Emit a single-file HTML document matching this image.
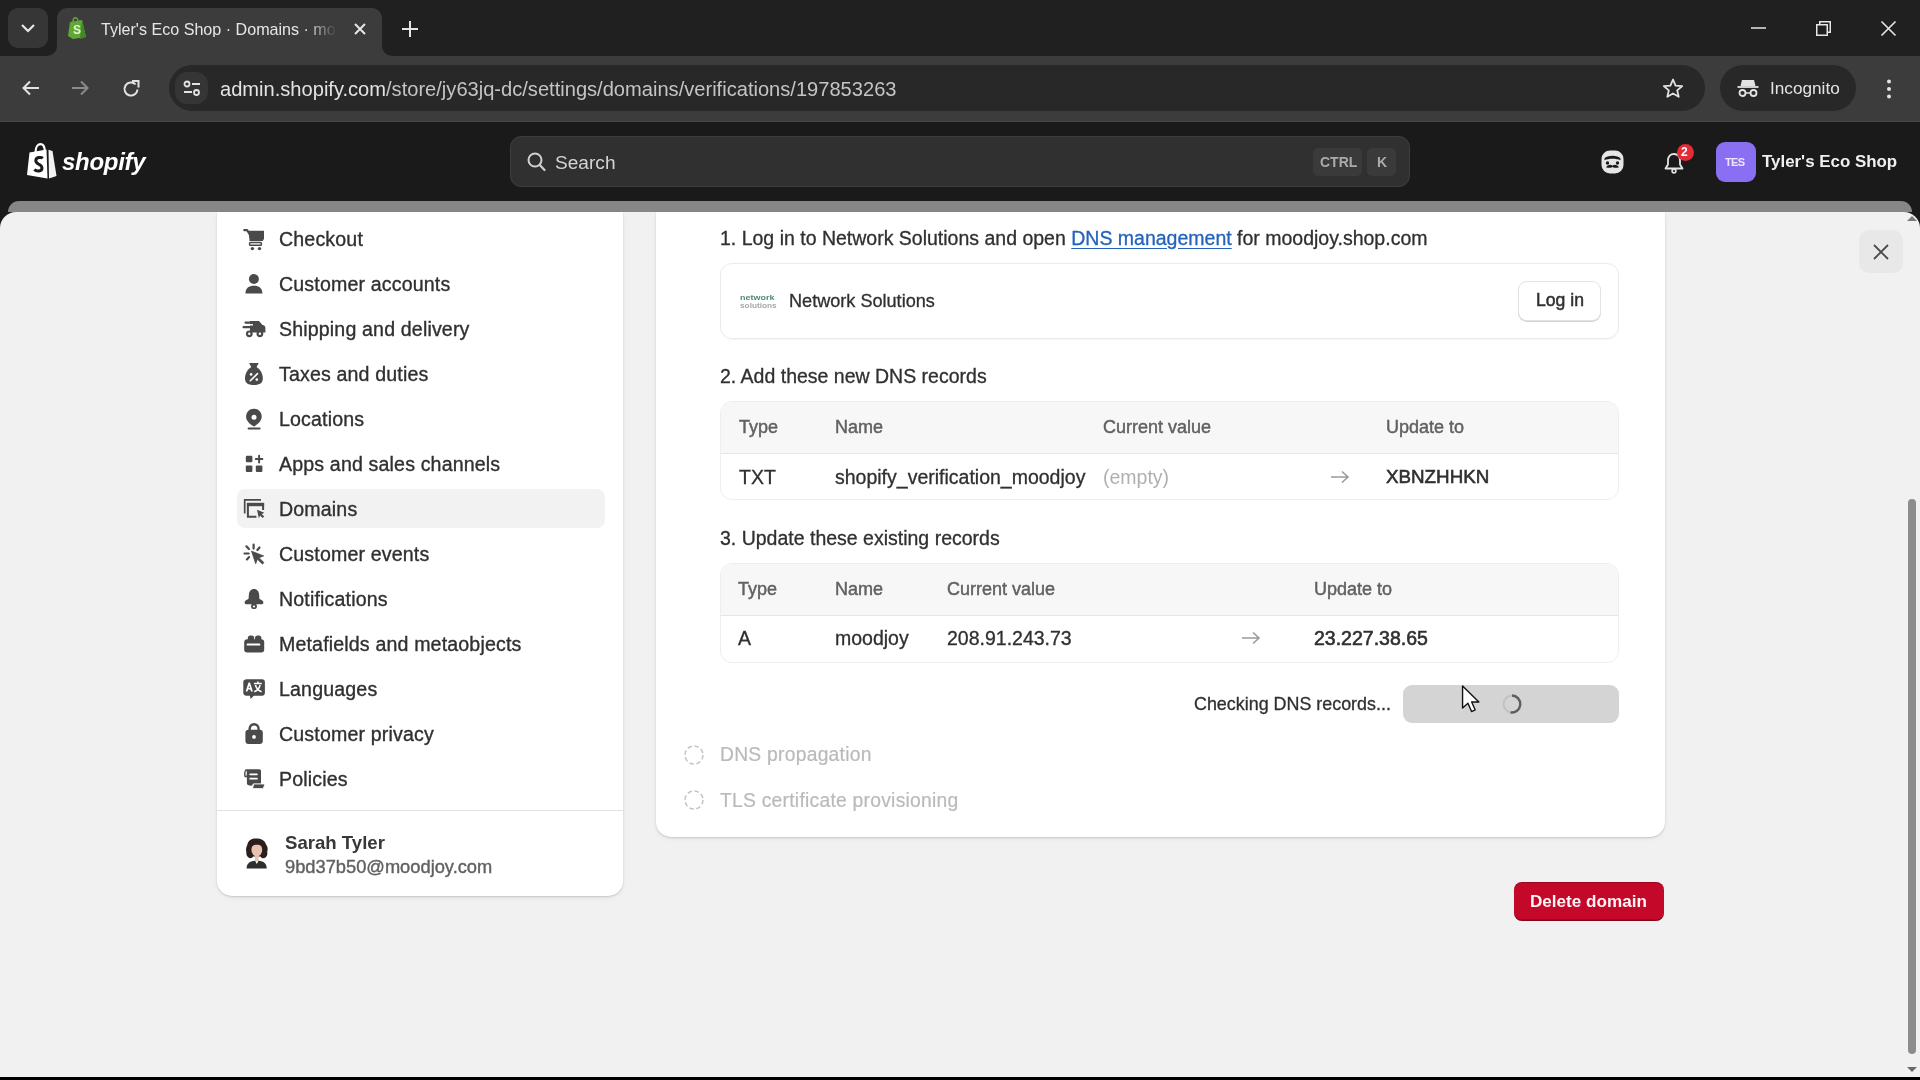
<!DOCTYPE html>
<html><head><meta charset="utf-8">
<style>
*{margin:0;padding:0;box-sizing:border-box}
html,body{width:1920px;height:1080px;overflow:hidden;background:#f1f1f1;font-family:"Liberation Sans",sans-serif}
body{will-change:transform}
.a{position:absolute}
.t{position:absolute;white-space:nowrap;line-height:1}
.card{position:absolute;background:#fff}
.st{-webkit-text-stroke:0.2px currentColor}
svg{position:absolute;overflow:visible}
</style></head><body>
<div class="a" style="left:0;top:0;width:1920px;height:56px;background:#202020"></div>
<div class="a" style="left:8px;top:8px;width:40px;height:40px;border-radius:10px;background:#363636"></div>
<svg style="left:20px;top:22px" width="16" height="12"><path d="M2 3 L8 9 L14 3" stroke="#e8e8e8" stroke-width="2.2" fill="none"/></svg>
<div class="a" style="left:57px;top:8px;width:325px;height:48px;border-radius:10px 10px 0 0;background:#3c3c3c"></div>
<svg style="left:47px;top:46px" width="10" height="10"><path d="M0 10 A10 10 0 0 0 10 0 V10 Z" fill="#3c3c3c"/></svg>
<svg style="left:382px;top:46px" width="10" height="10"><path d="M0 0 A10 10 0 0 0 10 10 H0 Z" fill="#3c3c3c"/></svg>
<svg style="left:67px;top:16px" width="21" height="24" viewBox="0 0 21 24"><path d="M3 6 L15 4 L19 21 L6 23 L1 20 Z" fill="#5fa836"/><path d="M15 4 L19 21 L13 23 Z" fill="#3f8a24"/><path d="M6 6 C6 1 10 0 11 5" stroke="#5fa836" stroke-width="1.5" fill="none"/><text x="6" y="18" font-family="Liberation Sans" font-weight="bold" font-size="12" fill="#e8f5d0">S</text></svg>
<div class="t" style="left:101px;top:21px;font-size:16.1px;color:#e6e6e6;width:238px;overflow:hidden;-webkit-mask-image:linear-gradient(90deg,#000 205px,transparent 236px)">Tyler's Eco Shop · Domains · moodjoy</div>
<svg style="left:354px;top:23px" width="12" height="12"><path d="M1 1 L11 11 M11 1 L1 11" stroke="#e6e6e6" stroke-width="2" fill="none"/></svg>
<svg style="left:402px;top:21px" width="16" height="16"><path d="M8 0 V16 M0 8 H16" stroke="#e6e6e6" stroke-width="2" fill="none"/></svg>
<svg style="left:1751px;top:27px" width="16" height="2"><path d="M0 1 H15" stroke="#e6e6e6" stroke-width="1.5"/></svg>
<svg style="left:1816px;top:21px" width="16" height="16"><path d="M0.75 3.75 H11.25 V14.25 H0.75 Z M3.75 3.75 V0.75 H14.25 V11.25 H11.25" stroke="#e6e6e6" stroke-width="1.5" fill="none"/></svg>
<svg style="left:1881px;top:21px" width="15" height="15"><path d="M0.5 0.5 L14.5 14.5 M14.5 0.5 L0.5 14.5" stroke="#e6e6e6" stroke-width="1.6"/></svg>
<div class="a" style="left:0;top:56px;width:1920px;height:66px;background:#3c3c3c;border-bottom:1px solid #474747"></div>
<svg style="left:22px;top:80px" width="18" height="16"><path d="M17 8 H2 M8 1.5 L1.5 8 L8 14.5" stroke="#e3e3e3" stroke-width="2" fill="none"/></svg>
<svg style="left:71px;top:80px" width="18" height="16"><path d="M1 8 H16 M10 1.5 L16.5 8 L10 14.5" stroke="#8a8a8a" stroke-width="2" fill="none"/></svg>
<svg style="left:122px;top:80px" width="19" height="18"><path d="M15.5 9.5 A6.5 6.5 0 1 1 13.6 4.4" stroke="#e3e3e3" stroke-width="2" fill="none"/><path d="M10 1 H16.5 V7.5" stroke="#e3e3e3" stroke-width="2" fill="none"/></svg>
<div class="a" style="left:169px;top:65px;width:1536px;height:46px;border-radius:23px;background:#282828"></div>
<div class="a" style="left:175px;top:72px;width:33px;height:32px;border-radius:12px;background:#353535"></div>
<svg style="left:183px;top:80px" width="18" height="17"><circle cx="4" cy="4" r="2.5" stroke="#e3e3e3" stroke-width="1.8" fill="none"/><path d="M9 4 H17 M1 12 H9" stroke="#e3e3e3" stroke-width="1.8"/><circle cx="13.5" cy="12.5" r="2.5" stroke="#e3e3e3" stroke-width="1.8" fill="none"/></svg>
<div class="t" style="left:220px;top:79px;font-size:20.1px;color:#e3e3e3">admin.shopify.com<span style="color:#c4c4c4">/store/jy63jq-dc/settings/domains/verifications/197853263</span></div>
<svg style="left:1662px;top:78px" width="22" height="21"><path d="M11 1.5 L13.6 7.6 L20.2 8.1 L15.2 12.4 L16.7 18.8 L11 15.4 L5.3 18.8 L6.8 12.4 L1.8 8.1 L8.4 7.6 Z" stroke="#e3e3e3" stroke-width="1.8" fill="none" stroke-linejoin="round"/></svg>
<div class="a" style="left:1720px;top:65px;width:136px;height:46px;border-radius:23px;background:#282828"></div>
<svg style="left:1737px;top:79px" width="22" height="19"><path d="M5 1 H17 L18.5 7 H3.5 Z" fill="#e3e3e3"/><path d="M0.5 8 H21.5" stroke="#e3e3e3" stroke-width="1.8"/><circle cx="5.5" cy="14" r="3" stroke="#e3e3e3" stroke-width="1.8" fill="none"/><circle cx="16.5" cy="14" r="3" stroke="#e3e3e3" stroke-width="1.8" fill="none"/><path d="M8.5 14 H13.5" stroke="#e3e3e3" stroke-width="1.5"/></svg>
<div class="t" style="left:1770px;top:80px;font-size:17.2px;color:#e3e3e3">Incognito</div>
<svg style="left:1886px;top:79px" width="6" height="21"><circle cx="3" cy="2.5" r="2" fill="#e3e3e3"/><circle cx="3" cy="10" r="2" fill="#e3e3e3"/><circle cx="3" cy="17.5" r="2" fill="#e3e3e3"/></svg>
<div class="a" style="left:0;top:122px;width:1920px;height:108px;background:#1a1a1a"></div>
<svg style="left:26px;top:143px" width="32" height="37" viewBox="0 0 32 37"><path d="M3.5 9.5 L20.5 6.5 L21.5 35.5 L1 32 Z" fill="#fff"/><path d="M22.5 6.8 L26.5 8 L30.5 33 L23 35.6 Z" fill="#f2f2f2"/><path d="M9.5 9.5 C9.5 3 12.5 1.2 14.5 1.2 C17 1.2 18.5 3.5 18.8 7.5" stroke="#fff" stroke-width="2.2" fill="none"/><path d="M16.8 15.3 C15.5 14 9.8 13.8 9.8 17.8 C9.8 21.5 16 21 16 25 C16 28.8 10.5 28.8 8.3 26.5" stroke="#1a1a1a" stroke-width="3" fill="none"/></svg>
<div class="t" style="left:62px;top:150px;font-size:24px;font-weight:bold;font-style:italic;color:#fff;letter-spacing:-0.3px">shopify</div>
<div class="a" style="left:510px;top:136px;width:900px;height:51px;border-radius:11px;background:#303030;border:1px solid #3d3d3d"></div>
<svg style="left:527px;top:152px" width="19" height="20"><circle cx="8" cy="8" r="6.5" stroke="#d0d0d0" stroke-width="2" fill="none"/><path d="M12.8 13 L17.5 18" stroke="#d0d0d0" stroke-width="2.2" stroke-linecap="round"/></svg>
<div class="t" style="left:555px;top:153px;font-size:19.1px;color:#d4d4d4">Search</div>
<div class="a" style="left:1313px;top:148px;width:49px;height:28px;border-radius:5px;background:#3a3a3a"></div>
<div class="t" style="left:1320px;top:155px;font-size:14px;font-weight:bold;color:#ababab">CTRL</div>
<div class="a" style="left:1367px;top:148px;width:29px;height:28px;border-radius:5px;background:#3a3a3a"></div>
<div class="t" style="left:1377px;top:155px;font-size:14px;font-weight:bold;color:#ababab">K</div>
<svg style="left:1601px;top:150px" width="23" height="24" viewBox="0 0 23 24"><rect x="0.5" y="0.5" width="22" height="23" rx="8.5" fill="#e6e6e6"/><path d="M3.5 8.5 C6 4.8 17 4.8 19.5 8.5 L19.5 10.3 C16 8.3 7 8.3 3.5 10.3 Z" fill="#1a1a1a"/><circle cx="6.5" cy="13" r="1.7" fill="#1a1a1a"/><circle cx="16.5" cy="13" r="1.7" fill="#1a1a1a"/><path d="M5 17.2 C7.5 14.2 10 14.2 11.5 15.8 C13 14.2 15.5 14.2 18 17.2 C15.5 18.2 13.5 18 11.5 16.9 C9.5 18 7.5 18.2 5 17.2 Z" fill="#1a1a1a"/></svg>
<svg style="left:1663px;top:150px" width="24" height="25" viewBox="0 0 24 25"><path d="M11 4 C7 4 5 7 5 10.5 V14.5 L2.5 18.5 H19.5 L17 14.5 V10.5 C17 7 15 4 11 4 Z" stroke="#e3e3e3" stroke-width="1.8" fill="none" stroke-linejoin="round"/><circle cx="11" cy="21" r="1.9" stroke="#e3e3e3" stroke-width="1.6" fill="none"/></svg>
<div class="a" style="left:1677px;top:144px;width:17px;height:17px;border-radius:9px;background:#e22c38"></div>
<div class="t" style="left:1681px;top:146px;font-size:12px;font-weight:bold;color:#fff">2</div>
<div class="a" style="left:1716px;top:142px;width:40px;height:40px;border-radius:9px;background:#8a6ff3"></div>
<div class="t" style="left:1725px;top:157px;font-size:11px;font-weight:bold;color:#ece6ff;letter-spacing:-0.6px">TES</div>
<div class="t" style="left:1762px;top:154px;font-size:16.9px;font-weight:bold;color:#f0f0f0">Tyler's Eco Shop</div>
<div class="a" style="left:8px;top:201px;width:1904px;height:11px;border-radius:12px 12px 0 0;background:#878787"></div>
<div class="a" style="left:0;top:212px;width:1920px;height:865px;border-radius:16px 16px 0 0;background:#f1f1f1"></div>
<div class="card" style="left:217px;top:212px;width:406px;height:684px;border-radius:0 0 15px 15px;box-shadow:0 1px 2px rgba(0,0,0,0.16), 0 2px 6px rgba(0,0,0,0.04)"></div>
<div class="a" style="left:237px;top:489px;width:368px;height:39px;border-radius:8px;background:#f2f2f2"></div>
<div class="t" style="left:279px;top:230.4px;font-size:19.6px;color:#303030;-webkit-text-stroke:0.35px #303030;letter-spacing:0.15px">Checkout</div>
<div class="t" style="left:279px;top:275.4px;font-size:19.6px;color:#303030;-webkit-text-stroke:0.35px #303030;letter-spacing:0.15px">Customer accounts</div>
<div class="t" style="left:279px;top:320.4px;font-size:19.6px;color:#303030;-webkit-text-stroke:0.35px #303030;letter-spacing:0.15px">Shipping and delivery</div>
<div class="t" style="left:279px;top:365.4px;font-size:19.6px;color:#303030;-webkit-text-stroke:0.35px #303030;letter-spacing:0.15px">Taxes and duties</div>
<div class="t" style="left:279px;top:410.4px;font-size:19.6px;color:#303030;-webkit-text-stroke:0.35px #303030;letter-spacing:0.15px">Locations</div>
<div class="t" style="left:279px;top:455.4px;font-size:19.6px;color:#303030;-webkit-text-stroke:0.35px #303030;letter-spacing:0.15px">Apps and sales channels</div>
<div class="t" style="left:279px;top:500.4px;font-size:19.6px;color:#303030;-webkit-text-stroke:0.35px #303030;letter-spacing:0.15px">Domains</div>
<div class="t" style="left:279px;top:545.4px;font-size:19.6px;color:#303030;-webkit-text-stroke:0.35px #303030;letter-spacing:0.15px">Customer events</div>
<div class="t" style="left:279px;top:590.4px;font-size:19.6px;color:#303030;-webkit-text-stroke:0.35px #303030;letter-spacing:0.15px">Notifications</div>
<div class="t" style="left:279px;top:635.4px;font-size:19.6px;color:#303030;-webkit-text-stroke:0.35px #303030;letter-spacing:0.15px">Metafields and metaobjects</div>
<div class="t" style="left:279px;top:680.4px;font-size:19.6px;color:#303030;-webkit-text-stroke:0.35px #303030;letter-spacing:0.15px">Languages</div>
<div class="t" style="left:279px;top:725.4px;font-size:19.6px;color:#303030;-webkit-text-stroke:0.35px #303030;letter-spacing:0.15px">Customer privacy</div>
<div class="t" style="left:279px;top:770.4px;font-size:19.6px;color:#303030;-webkit-text-stroke:0.35px #303030;letter-spacing:0.15px">Policies</div>
<svg style="left:244px;top:229px" width="20" height="20" viewBox="0 0 20 20"><path d="M0.3 1.2 H3.2 L5.2 4.5" stroke="#4a4a4a" stroke-width="2.2" fill="none" stroke-linecap="round" stroke-linejoin="round"/>
<path d="M4.4 1.8 H20 V9.8 L18.8 12 H5.6 Z" fill="#4a4a4a"/>
<rect x="5.6" y="13.6" width="11.8" height="2.6" rx="0.8" fill="none" stroke="#4a4a4a" stroke-width="1.5"/>
<circle cx="8.4" cy="19.6" r="1.7" fill="#4a4a4a"/><circle cx="15.5" cy="19.6" r="1.7" fill="#4a4a4a"/></svg>
<svg style="left:244px;top:274px" width="20" height="20" viewBox="0 0 20 20"><circle cx="9.9" cy="5" r="5" fill="#4a4a4a"/>
<path d="M1.4 19.5 C1.4 14 5 11.7 9.9 11.7 C14.8 11.7 18.4 14 18.4 19.5 Z" fill="#4a4a4a"/></svg>
<svg style="left:244px;top:319px" width="20" height="20" viewBox="0 0 20 20"><path d="M6 2 H15 L18.5 6 C20.5 6.3 21.4 7.3 21.4 9 V13.5 H6 Z" fill="#4a4a4a"/>
<path d="M1.5 3.6 H9 M-0.4 8.2 H9" stroke="#4a4a4a" stroke-width="2.2" stroke-linecap="round"/>
<path d="M2.5 5.8 H9" stroke="#fff" stroke-width="1.4"/>
<circle cx="5.3" cy="14.8" r="3.4" fill="#4a4a4a"/><circle cx="5.3" cy="14.8" r="1.2" fill="#fff"/>
<circle cx="15.9" cy="14.8" r="3.4" fill="#4a4a4a"/><circle cx="15.9" cy="14.8" r="1.2" fill="#fff"/></svg>
<svg style="left:244px;top:364px" width="20" height="20" viewBox="0 0 20 20"><path d="M5.1 -1 H14.7 L12.5 3.2 H7.3 Z" fill="#4a4a4a"/>
<path d="M7.3 3 C2.5 6 1 10.5 1 14.5 C1 19 4 21 9.9 21 C15.8 21 18.8 19 18.8 14.5 C18.8 10.5 17.3 6 12.5 3 Z" fill="#4a4a4a"/>
<path d="M6.3 16.8 L13.5 9.6" stroke="#fff" stroke-width="1.6" stroke-linecap="round"/>
<circle cx="7.1" cy="10.4" r="1.3" fill="#fff"/><circle cx="12.8" cy="15.6" r="1.3" fill="#fff"/></svg>
<svg style="left:244px;top:409px" width="20" height="20" viewBox="0 0 20 20"><path d="M9.9 -0.3 C14.4 -0.3 17.7 3 17.7 7.6 C17.7 11.6 14.5 15 9.9 17.6 C5.3 15 2.1 11.6 2.1 7.6 C2.1 3 5.4 -0.3 9.9 -0.3 Z" fill="#4a4a4a"/>
<circle cx="10" cy="8.2" r="2.5" fill="#fff"/>
<rect x="3.6" y="18.5" width="13" height="2" rx="1" fill="#4a4a4a"/></svg>
<svg style="left:244px;top:454px" width="20" height="20" viewBox="0 0 20 20"><rect x="1.8" y="1.7" width="6.6" height="6.5" rx="1.2" fill="#4a4a4a"/>
<rect x="1.8" y="11.4" width="6.6" height="6.6" rx="1.2" fill="#4a4a4a"/>
<rect x="11.8" y="11.4" width="6.6" height="6.6" rx="1.2" fill="#4a4a4a"/>
<path d="M15.1 1.8 V8.4 M11.8 5.1 H18.4" stroke="#4a4a4a" stroke-width="2" stroke-linecap="round"/></svg>
<svg style="left:244px;top:499px" width="20" height="20" viewBox="0 0 20 20"><path d="M0.7 14.5 V0.9 H17" stroke="#4a4a4a" stroke-width="1.7" fill="none"/>
<path d="M12.4 17.7 H3.9 V5 H19.1 V11" stroke="#4a4a4a" stroke-width="2" fill="none"/>
<rect x="2.9" y="3.8" width="17.2" height="3.4" fill="#4a4a4a"/>
<path d="M13 10.8 L20.4 13.8 L17.7 15 L20.2 17.5 L18.6 19.1 L16.1 16.6 L14.9 19.3 Z" fill="#4a4a4a" stroke-linejoin="round"/></svg>
<svg style="left:244px;top:544px" width="20" height="20" viewBox="0 0 20 20"><path d="M9.6 0.6 V4.6 M2.4 2.3 L4.9 5 M0.5 9.5 H4.7 M15.5 3.5 L13.4 6 M5.1 13.1 L2.9 15.4" stroke="#4a4a4a" stroke-width="2.2" stroke-linecap="round"/>
<path d="M7.4 7 L19.8 11.9 L15.1 13.7 L20 18.6 L18.4 20.2 L13.5 15.3 L11.7 19.9 Z" fill="#4a4a4a" stroke="#4a4a4a" stroke-width="0.6" stroke-linejoin="round"/></svg>
<svg style="left:244px;top:589px" width="20" height="20" viewBox="0 0 20 20"><path d="M10 0 C6.8 0 5.1 2.6 4.9 5.6 L4.5 10 C2.2 10.8 0.6 12 0.6 13.5 C0.6 14.8 1.6 15.3 3.1 15.3 H16.9 C18.4 15.3 19.4 14.8 19.4 13.5 C19.4 12 17.8 10.8 15.5 10 L15.1 5.6 C14.9 2.6 13.2 0 10 0 Z" fill="#4a4a4a"/>
<circle cx="10" cy="17.2" r="2.9" fill="#4a4a4a"/><circle cx="10" cy="17.5" r="1.1" fill="#fff"/></svg>
<svg style="left:244px;top:634px" width="20" height="20" viewBox="0 0 20 20"><rect x="3.8" y="1.6" width="6.4" height="6" rx="2.6" fill="#4a4a4a"/><rect x="11" y="1.6" width="6.4" height="6" rx="2.6" fill="#4a4a4a"/>
<rect x="0.2" y="5.2" width="20" height="13.3" rx="3" fill="#4a4a4a"/>
<rect x="2.7" y="9.4" width="13.5" height="2.1" rx="0.6" fill="#fff"/></svg>
<svg style="left:244px;top:679px" width="20" height="20" viewBox="0 0 20 20"><path d="M2.5 0.2 H18.2 C19.6 0.2 20.9 1.3 20.9 2.7 V14.1 C20.9 15.5 19.6 16.8 18.2 16.8 H9.8 L6.6 20.1 L5.9 16.8 H2.3 C0.9 16.8 -0.7 15.5 -0.7 14.1 V2.7 C-0.7 1.3 0.9 0.2 2.5 0.2 Z" fill="#4a4a4a"/>
<path d="M1.6 12.6 L4.5 3.6 H6 L8.9 12.6 H7 L6.4 10.6 H4.1 L3.5 12.6 Z M4.6 8.9 H5.9 L5.25 6.6 Z" fill="#fff"/>
<path d="M10 4.4 H17.8 M13.9 2.6 V4.6 M11.4 6 C12.4 9.5 14.6 11.8 17.6 12.8 M16.2 6 C15.2 9.5 13 11.8 10.2 12.8" stroke="#fff" stroke-width="1.5" fill="none"/></svg>
<svg style="left:244px;top:724px" width="20" height="20" viewBox="0 0 20 20"><path d="M5.6 7 V5.2 C5.6 2 7.4 0.3 10.1 0.3 C12.8 0.3 14.6 2 14.6 5.2 V7" stroke="#4a4a4a" stroke-width="2.4" fill="none"/>
<rect x="1.4" y="5.8" width="17.4" height="14.1" rx="3.2" fill="#4a4a4a"/>
<circle cx="10" cy="12.9" r="1.9" fill="#fff"/></svg>
<svg style="left:244px;top:769px" width="20" height="20" viewBox="0 0 20 20"><path d="M1 8.2 C-0.4 8.2 -0.4 0.3 2.4 0.3 H15.2 C16.2 0.3 17 1.1 17 2.1 V14.9 H8.8 C8.8 15.5 8.5 16.7 7 16.7 C4.8 16.7 2.9 15.9 2.9 14.5 V8.2 Z" fill="#4a4a4a"/>
<path d="M2 7 C1.3 7 1.3 1.8 2.3 1.8 C3 1.8 3 7 2 7 Z" fill="#fff"/>
<path d="M6.2 5.3 H12.9 M6.2 9.7 H12.9" stroke="#fff" stroke-width="1.8" stroke-linecap="round"/>
<path d="M9.5 14.9 H21 C20.2 16.5 19.9 19.7 18.5 19.7 H8.2 C9 18.6 9.3 16.5 9.5 14.9 Z" fill="#4a4a4a" stroke="#fff" stroke-width="1"/></svg>
<svg style="left:244px;top:837px" width="25" height="32" viewBox="0 0 25 32">
<path d="M12 1.6 C7 1.4 4 4 3.3 8 C2.2 10 1.6 12.5 2.4 15 C2 17 2.8 19.5 4.8 20.8 C6.5 21.8 8.5 21 9 19.5 L16.5 19.5 C17.5 21.5 19.5 21.8 21.5 20.5 C23.5 19 23.5 16.5 23.2 14.5 C24.2 12 23.5 9 22 7.5 C21 3.5 17 1.6 12 1.6 Z" fill="#2b1f1c"/>
<ellipse cx="12.8" cy="12.8" rx="5.4" ry="6.8" fill="#e8c2ae"/>
<path d="M7 10.5 C7.5 6 10 5 13 5 C16 5 18.5 6.5 18.8 10 C17 8.3 15 7.8 12.8 7.8 C10.5 7.8 8.5 8.6 7 10.5 Z" fill="#2b1f1c"/>
<path d="M11 18.5 H14.6 V24.5 H11 Z" fill="#e8c2ae"/>
<path d="M2.6 31.4 C2.8 27 5.5 24 11 23.8 L12.8 27 L14.6 23.8 C20 24 22.6 27 22.8 31.4 Z" fill="#2f2f2f"/>
</svg>
<div class="a" style="left:217px;top:810px;width:406px;height:1px;background:#e3e3e3"></div>
<div class="t" style="left:285px;top:834.3px;font-size:18.6px;color:#383838;font-weight:bold">Sarah Tyler</div>
<div class="t" style="left:285px;top:858.4px;font-size:18.3px;color:#616161;-webkit-text-stroke:0.4px #616161">9bd37b50@moodjoy.com</div>
<div class="card" style="left:656px;top:212px;width:1009px;height:625px;border-radius:0 0 15px 15px;box-shadow:0 1px 2px rgba(0,0,0,0.16), 0 2px 6px rgba(0,0,0,0.04)"></div>
<div class="t" style="left:720px;top:229.0px;font-size:19.5px;color:#303030;-webkit-text-stroke:0.3px currentColor">1. Log in to Network Solutions and open <span style="color:#2463bc;text-decoration:underline;text-underline-offset:3px">DNS management</span> for moodjoy.shop.com</div>
<div class="a" style="left:720px;top:263px;width:899px;height:76px;border:1px solid #ebebeb;border-radius:12px;box-shadow:0 1px 1px rgba(0,0,0,0.04)"></div>
<div class="t" style="left:740px;top:294px;font-size:7.5px;color:#4f8a70;font-weight:bold;transform:scaleX(1.2);transform-origin:0 0">network</div>
<div class="t" style="left:740px;top:302px;font-size:7.5px;color:#a8a8a8;font-weight:bold;transform:scaleX(1.1);transform-origin:0 0">solutions</div>
<div class="t" style="left:789px;top:292.1px;font-size:18.1px;color:#303030;-webkit-text-stroke:0.3px currentColor">Network Solutions</div>
<div class="a" style="left:1519px;top:282px;width:81px;height:38px;border-radius:8px;background:#fff;box-shadow:0 0 0 1px #e3e3e3, 0 1px 0 1px #d4d4d4"></div>
<div class="t" style="left:1536px;top:292.2px;font-size:17.6px;color:#303030;-webkit-text-stroke:0.5px #303030">Log in</div>
<div class="t" style="left:720px;top:367.1px;font-size:19.5px;color:#303030;-webkit-text-stroke:0.3px currentColor">2. Add these new DNS records</div>
<div class="a" style="left:720px;top:401px;width:899px;height:99px;border:1px solid #eeeeee;border-radius:12px;overflow:hidden"><div class="a" style="left:0;top:0;width:897px;height:52px;background:#f7f7f7;border-bottom:1px solid #e6e6e6"></div></div>
<div class="t" style="left:739px;top:418.1px;font-size:18px;color:#616161;-webkit-text-stroke:0.45px #616161">Type</div>
<div class="t" style="left:835px;top:418.1px;font-size:18px;color:#616161;-webkit-text-stroke:0.45px #616161">Name</div>
<div class="t" style="left:1103px;top:418.1px;font-size:18px;color:#616161;-webkit-text-stroke:0.45px #616161">Current value</div>
<div class="t" style="left:1386px;top:418.1px;font-size:18px;color:#616161;-webkit-text-stroke:0.45px #616161">Update to</div>
<div class="t" style="left:739px;top:467.7px;font-size:19.5px;color:#303030;-webkit-text-stroke:0.3px currentColor">TXT</div>
<div class="t" style="left:835px;top:467.7px;font-size:19.5px;color:#303030;-webkit-text-stroke:0.3px currentColor">shopify_verification_moodjoy</div>
<div class="t" style="left:1103px;top:467.7px;font-size:19.5px;color:#b0b0b0;">(empty)</div>
<svg style="left:1330px;top:470px" width="20" height="14"><path d="M1 7 H18 M12 1.5 L18 7 L12 12.5" stroke="#9a9a9a" stroke-width="1.6" fill="none"/></svg>
<div class="t" style="left:1386px;top:468.3px;font-size:18.8px;color:#303030;-webkit-text-stroke:0.6px #303030">XBNZHHKN</div>
<div class="t" style="left:720px;top:529.1px;font-size:19.5px;color:#303030;-webkit-text-stroke:0.3px currentColor">3. Update these existing records</div>
<div class="a" style="left:720px;top:563px;width:899px;height:100px;border:1px solid #eeeeee;border-radius:12px;overflow:hidden"><div class="a" style="left:0;top:0;width:897px;height:52px;background:#f7f7f7;border-bottom:1px solid #e6e6e6"></div></div>
<div class="t" style="left:738px;top:580.4px;font-size:18px;color:#616161;-webkit-text-stroke:0.45px #616161">Type</div>
<div class="t" style="left:835px;top:580.4px;font-size:18px;color:#616161;-webkit-text-stroke:0.45px #616161">Name</div>
<div class="t" style="left:947px;top:580.4px;font-size:18px;color:#616161;-webkit-text-stroke:0.45px #616161">Current value</div>
<div class="t" style="left:1314px;top:580.4px;font-size:18px;color:#616161;-webkit-text-stroke:0.45px #616161">Update to</div>
<div class="t" style="left:738px;top:629.0px;font-size:19.5px;color:#303030;-webkit-text-stroke:0.3px currentColor">A</div>
<div class="t" style="left:835px;top:629.0px;font-size:19.5px;color:#303030;-webkit-text-stroke:0.3px currentColor">moodjoy</div>
<div class="t" style="left:947px;top:629.0px;font-size:19.5px;color:#303030;-webkit-text-stroke:0.3px currentColor">208.91.243.73</div>
<svg style="left:1241px;top:631px" width="20" height="14"><path d="M1 7 H18 M12 1.5 L18 7 L12 12.5" stroke="#9a9a9a" stroke-width="1.6" fill="none"/></svg>
<div class="t" style="left:1314px;top:629.0px;font-size:19.5px;color:#303030;-webkit-text-stroke:0.6px #303030">23.227.38.65</div>
<div class="t" style="left:1194px;top:696.3px;font-size:17.9px;color:#303030;-webkit-text-stroke:0.3px currentColor">Checking DNS records...</div>
<div class="a" style="left:1403px;top:685px;width:216px;height:38px;border-radius:9px;background:#d4d4d4"></div>
<svg style="left:1500px;top:692px" width="24" height="24"><circle cx="12" cy="12" r="8.5" stroke="#c2c2c2" stroke-width="2" fill="none"/><path d="M12 3.5 A8.5 8.5 0 1 1 10.5 20.4" stroke="#5e5e5e" stroke-width="2.4" fill="none"/></svg>
<div class="t" style="left:720px;top:745.1px;font-size:19.3px;color:#bababa;letter-spacing:0.25px;-webkit-text-stroke:0.2px #bababa">DNS propagation</div>
<svg style="left:684px;top:745.0px" width="20" height="20"><circle cx="10" cy="10" r="9" stroke="#c4c4c4" stroke-width="1.5" fill="none" stroke-dasharray="4.5 2.6"/></svg>
<div class="t" style="left:720px;top:791.1px;font-size:19.3px;color:#bababa;letter-spacing:0.25px;-webkit-text-stroke:0.2px #bababa">TLS certificate provisioning</div>
<svg style="left:684px;top:789.5px" width="20" height="20"><circle cx="10" cy="10" r="9" stroke="#c4c4c4" stroke-width="1.5" fill="none" stroke-dasharray="4.5 2.6"/></svg>
<div class="a" style="left:1514px;top:882px;width:150px;height:39px;border-radius:8px;background:#c4082a;box-shadow:inset 0 -1.5px 0 rgba(0,0,0,0.3), inset 0 1px 0 rgba(0,0,0,0.2)"></div>
<div class="t" style="left:1530px;top:892.7px;font-size:17.1px;color:#fff4f6;font-weight:bold">Delete domain</div>
<div class="a" style="left:1859px;top:230px;width:44px;height:43px;border-radius:10px;background:#e8e8e8"></div>
<svg style="left:1873px;top:244px" width="16" height="16"><path d="M1 1 L15 15 M15 1 L1 15" stroke="#4a4a4a" stroke-width="1.8"/></svg>
<div class="a" style="left:1908px;top:499px;width:8px;height:555px;border-radius:4px;background:#8c8c8c"></div>
<svg style="left:1906px;top:214px" width="12" height="8"><path d="M1 7 L6 2 L11 7 Z" fill="#7a7a7a"/></svg>
<svg style="left:1906px;top:1066px" width="12" height="8"><path d="M1 1 L6 6 L11 1 Z" fill="#6a6a6a"/></svg>
<svg style="left:1461px;top:685px" width="22" height="30" viewBox="0 0 20 28"><path d="M1.2 1 L1.2 21.5 L6.2 17 L9.6 24.8 L13 23.3 L9.7 15.8 L16.4 15.8 Z" fill="#fff" stroke="#111" stroke-width="1.3" stroke-linejoin="round"/></svg>
<div class="a" style="left:0;top:1077px;width:1920px;height:3px;background:#000"></div>
</body></html>
